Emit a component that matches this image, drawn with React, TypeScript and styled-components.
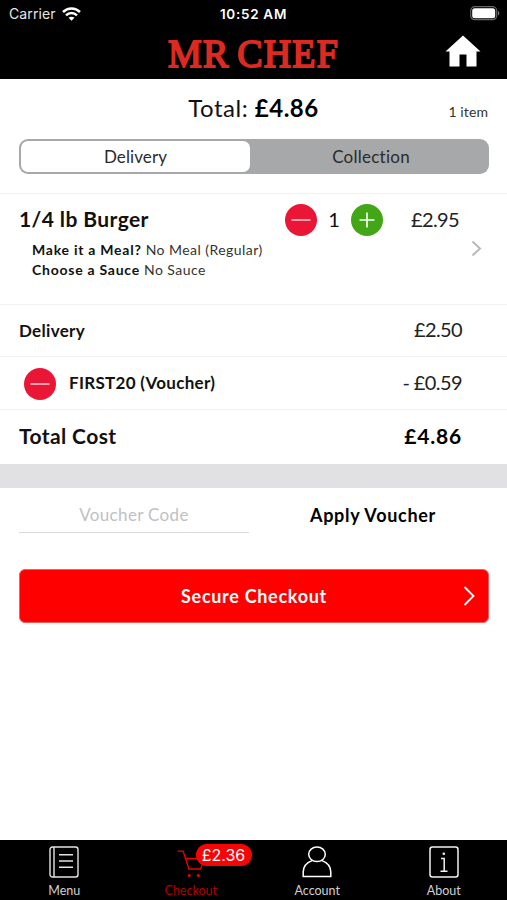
import React from 'react'
import styled, { createGlobalStyle } from 'styled-components'

const tabs = [
  { name: 'Menu' },
  { name: 'Checkout', badge: '£2.36' },
  { name: 'Account' },
  { name: 'About' },
]

const options = [
  { label: 'Make it a Meal?', value: 'No Meal (Regular)' },
  { label: 'Choose a Sauce', value: 'No Sauce' },
]

const TabIcon = ({ name }: { name: string }) => {
  if (name === 'Menu') {
    return (
      <svg width="30" height="32" viewBox="0 0 30 32" fill="none" stroke="#e4e4e4" strokeWidth="1.4">
        <rect x="1" y="1" width="28" height="30" rx="2.5" />
        <path d="M5 1v30M10 8.7h14M10 15h14M10 21.3h14" />
      </svg>
    )
  }
  if (name === 'Checkout') {
    return (
      <svg width="30" height="32" viewBox="0 0 30 32" fill="none" stroke="#f00000" strokeWidth="1.3">
        <path d="M1.5 5.200H7.200L13 23H24.500L28.500 12.500H9.500" />
        <circle cx="13.300" cy="29.500" r="1.500" fill="#f00000" stroke="none" />
        <circle cx="22.300" cy="29.500" r="1.500" fill="#f00000" stroke="none" />
      </svg>
    )
  }
  if (name === 'Account') {
    return (
      <svg width="30" height="32" viewBox="0 0 30 32" fill="none" stroke="#fff" strokeWidth="1.5">
        <ellipse cx="15" cy="8.3" rx="8.3" ry="7.3" />
        <path d="M10.5 14.4C4.5 16.6 1.2 20 1.2 26v4.5h27.6V26c0-6-3.3-9.4-9.3-11.6" />
      </svg>
    )
  }
  return (
    <svg width="30" height="32" viewBox="0 0 30 32" fill="none" stroke="#f2f2f2" strokeWidth="1.5">
      <rect x="1" y="1" width="28" height="30" rx="2.5" />
      <path d="M12 12.5h3.200V25M11.500 25.300h7" />
      <circle cx="14.800" cy="7.800" r="1.300" fill="#f2f2f2" stroke="none" />
    </svg>
  )
}

const Round = ({ plus }: { plus?: boolean }) => (
  <RoundButton $plus={plus}>
    <svg width="32" height="32" viewBox="0 0 32 32" stroke="#fff" strokeWidth={plus ? 1.6 : 1.2}>
      {plus ? <path d="M8.5 16h15M16 8.5v15" /> : <path d="M6.5 16h19" />}
    </svg>
  </RoundButton>
)

const App = () => {
  return (
    <Screen>
      <GlobalStyle />
      <Header>
        <StatusBar>
          <Carrier>
            Carrier
            <svg width="19" height="14" viewBox="0 0 19 14" fill="none" stroke="#fff" strokeWidth="2.5">
              <path d="M1 5C5.8.4 13.2.4 18 5" />
              <path d="M4 8.3c3.2-3 7.8-3 11 0" />
              <path d="M9.5 13.7 6.5 10.8c1.7-1.5 4.3-1.5 6 0z" fill="#fff" stroke="none" />
            </svg>
          </Carrier>
          <Clock>10:52 AM</Clock>
          <Battery>
            <svg width="30" height="15" viewBox="0 0 30 15">
              <rect x=".7" y=".7" width="26" height="13" rx="4" fill="none" stroke="#666" strokeWidth="1.2" />
              <rect x="2.2" y="2.2" width="23" height="10" rx="2.5" fill="#fff" />
              <path d="M28 5v4.5c1.8-.5 1.8-4 0-4.500z" fill="#777" />
            </svg>
          </Battery>
        </StatusBar>
        <TitleBar>
          <Logo>MR CHEF</Logo>
          <Home>
            <svg width="36" height="32" viewBox="0 0 36 32" fill="#fff">
              <path d="M18 .5 35.5 16.5H31.5V31.5H21.5V19.5H14.5V31.5H4.5V16.5H.5z" />
            </svg>
          </Home>
        </TitleBar>
      </Header>

      <Summary>
        <Total>Total: <b>£4.86</b></Total>
        <ItemCount>1 item</ItemCount>
      </Summary>
      <Segments>
        <Segment $active>Delivery</Segment>
        <Segment>Collection</Segment>
      </Segments>

      <Item>
        <ItemTop>
          <ItemName>1/4 lb Burger</ItemName>
          <Round />
          <Quantity>1</Quantity>
          <Round plus />
          <Price>£2.95</Price>
        </ItemTop>
        <ItemBottom>
          <div>
            {options.map((o) => (
              <Option key={o.label}><b>{o.label}</b> {o.value}</Option>
            ))}
          </div>
          <svg width="11" height="17" viewBox="0 0 11 17" fill="none" stroke="#b9b9b9" strokeWidth="2">
            <path d="M1.5 1.5 9 8.5 1.5 15.5" />
          </svg>
        </ItemBottom>
      </Item>
      <Row $height={52}>
        <RowName>Delivery</RowName>
        <Price>£2.50</Price>
      </Row>
      <Row $height={53}>
        <Round />
        <RowName>FIRST20 (Voucher)</RowName>
        <Price>- £0.59</Price>
      </Row>
      <Row $height={55}>
        <TotalName>Total Cost</TotalName>
        <TotalPrice>£4.86</TotalPrice>
      </Row>
      <Band />

      <VoucherForm>
        <VoucherInput>Voucher Code</VoucherInput>
        <Apply>Apply Voucher</Apply>
      </VoucherForm>
      <CheckoutButton>
        <span>Secure Checkout</span>
        <svg width="12" height="20" viewBox="0 0 12 20" fill="none" stroke="#fff" strokeWidth="1.8">
          <path d="M1.5 1 10.5 10 1.5 19" />
        </svg>
      </CheckoutButton>

      <TabBar>
        {tabs.map((tab) => (
          <Tab key={tab.name} $active={!!tab.badge}>
            <TabIcon name={tab.name} />
            <span>{tab.name}</span>
            {tab.badge && <Badge>{tab.badge}</Badge>}
          </Tab>
        ))}
      </TabBar>
    </Screen>
  )
}

const GlobalStyle = createGlobalStyle`
  * {
    box-sizing: border-box;
  }
  body {
    margin: 0;
    background: #fff;
  }
  svg {
    display: block;
    flex: none;
  }
`
const Screen = styled.div`
  width: 507px;
  height: 900px;
  display: flex;
  flex-direction: column;
  overflow: hidden;
  background: #fff;
  color: #111;
  font-family: Lato, sans-serif;
  white-space: nowrap;
`
const Header = styled.header`
  height: 79px;
  flex: none;
  background: #000;
  color: #fff;
`
const StatusBar = styled.div`
  height: 27px;
  display: grid;
  grid-template-columns: 1fr auto 1fr;
  align-items: center;
  padding: 0 7px;
  font-family: Inter, sans-serif;
`
const Carrier = styled.div`
  display: flex;
  align-items: center;
  gap: 6px;
  padding-left: 2px;
  font-size: 14px;
  letter-spacing: 0.1px;
  color: #e6e6e6;
`
const Clock = styled.div`
  font-size: 13.5px;
  font-weight: 600;
  letter-spacing: 0.7px;
`
const Battery = styled.div`
  display: flex;
  justify-content: flex-end;
`
const TitleBar = styled.div`
  height: 52px;
  display: grid;
  grid-template-columns: 1fr auto 1fr;
  align-items: center;
  padding: 0 26px;
`
const Logo = styled.div`
  grid-column: 2;
  font-family: "Liberation Serif", serif;
  font-size: 38px;
  line-height: 52px;
  letter-spacing: 1.2px;
  word-spacing: -3px;
  color: #dc2a20;
  -webkit-text-stroke: 1.8px #dc2a20;
  transform: scaleY(1.05);
`
const Home = styled.div`
  display: flex;
  justify-content: flex-end;
  padding-bottom: 4px;
`
const Summary = styled.div`
  height: 60px;
  flex: none;
  display: grid;
  grid-template-columns: 1fr auto 1fr;
  align-items: baseline;
  padding: 14px 19px 0;
`
const Total = styled.div`
  grid-column: 2;
  font-size: 24px;
  line-height: 30px;
  letter-spacing: 0.5px;
  b {
    color: #000;
  }
`
const ItemCount = styled.div`
  text-align: right;
  font-size: 14px;
  letter-spacing: 0.1px;
  color: #333;
`
const Segments = styled.div`
  height: 35px;
  flex: none;
  display: flex;
  margin: 0 18px 19px 19px;
  padding: 2px;
  border-radius: 9px;
  background: #a6a8a9;
`
const Segment = styled.div<{ $active?: boolean }>`
  flex: ${({ $active }) => ($active ? '0 0 229px' : '1')};
  padding-left: ${({ $active }) => ($active ? 0 : 5)}px;
  border-radius: 7px;
  background: ${({ $active }) => ($active ? '#fff' : 'transparent')};
  text-align: center;
  font-size: 17px;
  line-height: 31px;
  letter-spacing: ${({ $active }) => ($active ? 0.1 : 0.25)}px;
  color: #2b2b2b;
`
const Item = styled.div`
  height: 111px;
  flex: none;
  padding: 10px 25px 0 19px;
  border-top: 1px solid #efefef;
`
const ItemTop = styled.div`
  height: 32px;
  display: flex;
  align-items: center;
  padding-right: 23px;
`
const ItemName = styled.div`
  width: 266px;
  padding-bottom: 3px;
  font-size: 21px;
  font-weight: 700;
  letter-spacing: 0.4px;
`
const Quantity = styled.div`
  width: 34px;
  padding-bottom: 3px;
  text-align: center;
  font-size: 20px;
`
const ItemBottom = styled.div`
  display: flex;
  justify-content: space-between;
  align-items: flex-start;
  padding: 4px 0 0 13px;
`
const Option = styled.div`
  font-size: 14px;
  line-height: 20px;
  letter-spacing: 0.45px;
  color: #333;
  b {
    letter-spacing: 0.75px;
    color: #111;
  }
`
const RoundButton = styled.div<{ $plus?: boolean }>`
  width: 32px;
  height: 32px;
  flex: none;
  border-radius: 50%;
  background: ${({ $plus }) => ($plus ? '#43a617' : '#eb1636')};
`
const Price = styled.div`
  margin-left: auto;
  padding-bottom: 3px;
  font-size: 20px;
  letter-spacing: -0.6px;
  color: #222;
`
const Row = styled.div<{ $height: number }>`
  height: ${({ $height }) => $height}px;
  flex: none;
  display: flex;
  align-items: center;
  padding: 0 45px 0 19px;
  border-top: 1px solid #f1f1f1;
  ${RoundButton} {
    margin: 1px 13px 0 5px;
  }
`
const RowName = styled.div`
  padding-bottom: 1px;
  font-size: 17px;
  font-weight: 700;
  letter-spacing: 0.3px;
`
const TotalName = styled(RowName)`
  padding-bottom: 4px;
  font-size: 21px;
  letter-spacing: 0.4px;
`
const TotalPrice = styled(Price)`
  padding-bottom: 4px;
  font-size: 21px;
  font-weight: 700;
  letter-spacing: 0.8px;
  color: #000;
`
const Band = styled.div`
  height: 24px;
  flex: none;
  background: #e1e1e3;
`
const VoucherForm = styled.div`
  height: 45px;
  flex: none;
  display: flex;
  padding-left: 19px;
`
const VoucherInput = styled.div`
  width: 230px;
  border-bottom: 1px solid #d9d9db;
  text-align: center;
  font-size: 17px;
  line-height: 54px;
  letter-spacing: 0.35px;
  color: #c0c1c4;
`
const Apply = styled.div`
  flex: 1;
  padding-right: 10px;
  text-align: center;
  font-size: 18px;
  font-weight: 700;
  line-height: 54px;
  letter-spacing: 0.7px;
  color: #000;
`
const CheckoutButton = styled.div`
  height: 54px;
  flex: none;
  display: grid;
  grid-template-columns: 1fr auto 1fr;
  align-items: center;
  margin: 36px 18px 0 19px;
  padding: 0 13px;
  border: 1px solid #ff5a5a;
  border-radius: 6px;
  background: #fe0000;
  color: #fff;
  font-size: 18px;
  font-weight: 700;
  letter-spacing: 0.7px;
  span {
    grid-column: 2;
  }
  svg {
    justify-self: end;
  }
`
const TabBar = styled.nav`
  height: 60px;
  display: grid;
  grid-template-columns: repeat(4, 1fr);
  margin-top: auto;
  padding-left: 1px;
  background: #000;
`
const Tab = styled.div<{ $active: boolean }>`
  position: relative;
  display: flex;
  flex-direction: column;
  align-items: center;
  padding-top: 6px;
  font-size: 12.5px;
  line-height: 16px;
  color: ${({ $active }) => ($active ? '#b50000' : '#d0d0d0')};
  span {
    margin-top: 5px;
  }
`
const Badge = styled.div`
  position: absolute;
  top: 4px;
  left: 68px;
  width: 56px;
  height: 22px;
  border-radius: 11px;
  background: #f50505;
  color: #fff;
  text-align: center;
  font-family: Inter, sans-serif;
  font-size: 16px;
  line-height: 22px;
`

export default App
